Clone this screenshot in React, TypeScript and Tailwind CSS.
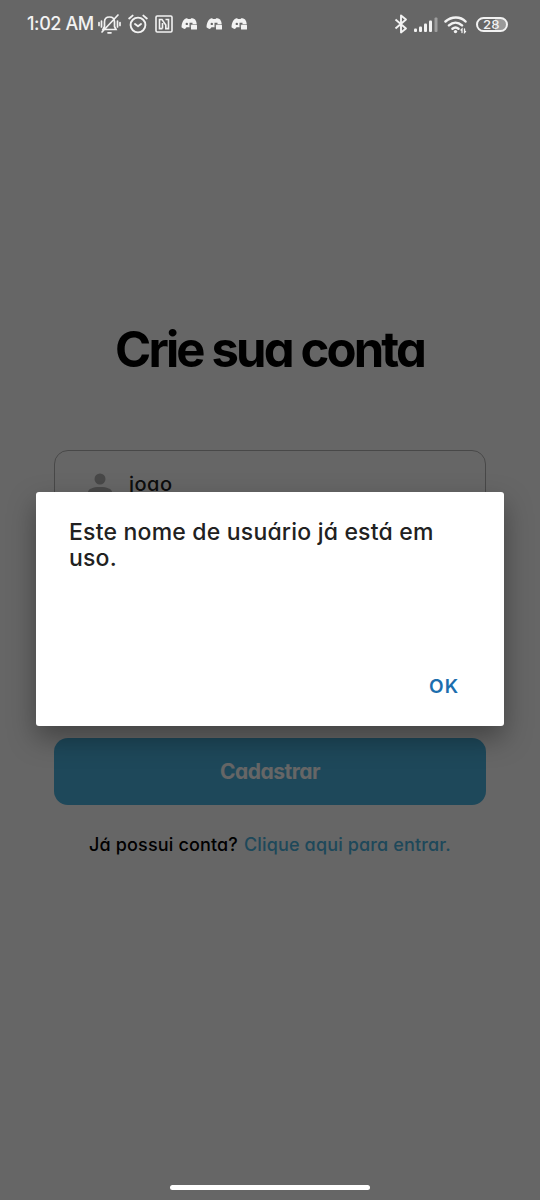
import React from "react";

const font = "font-[Inter,'Open_Sans',sans-serif] [font-feature-settings:'cv11','ss03']";

function Chat() {
  return (
    <svg className="h-[16px] w-[17px]" viewBox="0 0 17 16" fill="#f2f2f2">
      <path d="M3.200 3.500C4.500 2.500 5.500 2.200 6.300 2.300l.5.700h2.800l.5-.8c1.600 0 3 .5 4 1.300 1.100 1.500 1.500 3 1.600 4.700H9.500v3H5.500l-1.500 1.700C2.500 12.700 1.300 12.200.5 11.300.5 8 1.500 5.500 3.200 3.500Z" />
      <circle cx="5.800" cy="7.900" r="1.200" fill="#666" />
      <path d="M8.500 6.800h3v1.600H9.700v3.400H8.500z" fill="#666" />
      <rect x="10" y="8.700" width="6" height="4.800" rx=".6" />
    </svg>
  );
}

function StatusBar() {
  return (
    <header className="absolute inset-x-0 top-0 flex h-12 items-center pl-[27px] pr-[32px] text-[#f2f2f2]">
      <span className="w-[70px] whitespace-nowrap text-[18px] font-medium leading-6 tracking-[-0.4px]">1:02 AM</span>
      <svg className="ml-[1px] h-[22px] w-[23px]" viewBox="0 0 23 22" fill="none" stroke="currentColor" strokeWidth="1.700" strokeLinecap="round">
        <path d="M5 16.500h13l-1.500-3V9c0-3-2-5-5-5s-5 2-5 5v4.500ZM10 19.800h3M20 2 4 19M3.500 8v6M19.500 8v6M1 9.500v3M22 9.500v3" />
      </svg>
      <svg className="ml-[7px] h-[20px] w-[20px]" viewBox="0 0 20 20" fill="none" stroke="currentColor" strokeWidth="1.900" strokeLinecap="round" strokeLinejoin="round">
        <circle cx="10" cy="11" r="7.400" />
        <path d="M1.200 4.500 4.600 1.600M18.800 4.500l-3.400-2.900M7 10l3 2.300 3-2.300" />
      </svg>
      <svg className="ml-[7px] h-[18px] w-[18px]" viewBox="0 0 18 18" fill="none" stroke="currentColor" strokeWidth="1.600">
        <rect x="1" y="1" width="16" height="16" rx="1.200" />
        <path d="M7.500 13.600H4.500V4.500H7l3.800 5.500v3.600h2.700V4.500h-3M7.500 8v5.600" />
      </svg>
      <div className="ml-[8px] flex gap-[8px]"><Chat /><Chat /><Chat /></div>
      <div className="ml-auto flex items-center">
        <svg className="h-[20px] w-[14px]" viewBox="0 0 14 20" fill="none" stroke="currentColor" strokeWidth="1.900" strokeLinejoin="round">
          <path d="m1.500 5.500 10.500 9L7 18.500v-17l5 4-10.500 9" />
        </svg>
        <svg className="ml-[6px] mt-[2px] h-[16px] w-[24px]" viewBox="0 0 24 16" fill="currentColor">
          <rect y="11.500" width="3" height="3.500" rx="1" />
          <rect x="5" y="9.500" width="3" height="5.500" rx="1" />
          <rect x="10" y="6.500" width="3" height="8.500" rx="1" />
          <rect x="15" y="3.500" width="3" height="11.500" rx="1" />
          <rect x="20.500" y=".5" width="3" height="14.500" rx="1" opacity=".4" />
        </svg>
        <svg className="ml-[6px] mt-[1px] h-[18px] w-[24px]" viewBox="0 0 24 18" fill="none" stroke="currentColor" strokeWidth="2.500" strokeLinecap="round">
          <path d="M1.500 5.500c6-5.300 15-5.300 20 0M5 9.400c4-3.600 9-3.600 13 0M8.500 12.800c2-1.700 4-1.700 6 0" />
          <circle cx="11.500" cy="15.600" r="1.700" fill="currentColor" stroke="none" />
          <path d="M18 16.500v-3.500l-1 1M20.500 13v3.500l1-1" strokeWidth="1.300" />
        </svg>
        <div className="ml-[8px] mt-[1px] flex h-[15px] w-[32px] items-center rounded-full border-2 border-[#f2f2f2] bg-[linear-gradient(90deg,#666_60%,#999_60%)] pl-[5px] text-[12px] font-medium leading-none"><span className="w-[17px] origin-left scale-x-110">28</span></div>
      </div>
    </header>
  );
}

export default function App() {
  return (
    <div className={`relative h-[1200px] w-[540px] overflow-hidden bg-white ${font}`}>
      <main className="flex flex-col items-center px-[54px] pt-[320px]">
        <h1 className="whitespace-nowrap pr-[1px] text-[49px] font-bold leading-[60px] tracking-[-2.850px] text-black">Crie sua conta</h1>
        <div className="mt-[70px] flex h-[68px] w-full items-center rounded-[14px] border-[1.5px] border-[#b4b4b4] pl-[33px]">
          <svg className="h-[24px] w-[24px]" viewBox="0 0 24 24" fill="#b3b3b3">
            <circle cx="12" cy="7" r="5.500" />
            <path d="M0 24v-4c0-3 5-5 12-5s12 2 12 5v4Z" />
          </svg>
          <span className="ml-[17px] text-[20px] font-medium leading-6 tracking-[0.5px] text-[#222]">joao</span>
        </div>
        <button className="mt-[220px] h-[67px] w-full rounded-[14px] bg-[#4cb4e1] text-[21px] font-bold tracking-[-0.5px] text-white">Cadastrar</button>
        <p className="mt-[28px] flex gap-[6px] whitespace-nowrap text-[18px] font-medium leading-6 tracking-[0.150px] text-black">
          <span>Já possui conta?</span>
          <a className="text-[#4cb4e1]">Clique aqui para entrar.</a>
        </p>
      </main>
      <div className="absolute inset-0 bg-black/60" />
      <StatusBar />
      <section className="absolute left-[36px] top-[492px] flex h-[234px] w-[468px] flex-col justify-between rounded-[3px] bg-white pb-[26px] pl-[33px] pr-[45px] pt-[27px] shadow-[0_12px_28px_rgba(0,0,0,0.35)]">
        <p className="whitespace-nowrap text-[23px] font-medium leading-[26px] tracking-[0.200px] text-[#212121]">Este nome de usuário já está em<br />uso.</p>
        <button className="self-end text-[19px] font-semibold leading-[26px] tracking-[1px] text-[#1c6eae]">OK</button>
      </section>
      <div className="absolute bottom-[10px] left-[170px] h-[5px] w-[200px] rounded-full bg-white" />
    </div>
  );
}
